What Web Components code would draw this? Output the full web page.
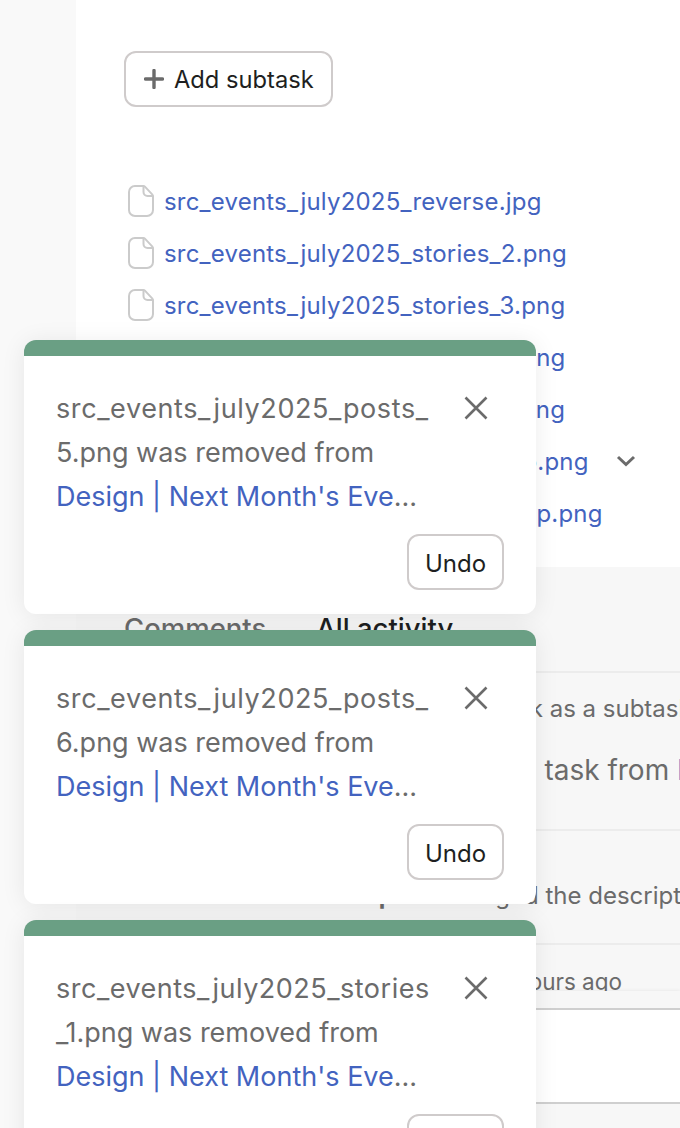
<!DOCTYPE html>
<html lang="en">
<head>
<meta charset="utf-8">
<title>Task</title>
<style>
  html, body { margin: 0; height: 100%; overflow: hidden; }
  body { font-family: Inter, "Liberation Sans", sans-serif; background: #f9f9f9; }
</style>
</head>
<body>

<task-page>
  <task-add-subtask slot="main"></task-add-subtask>
  <file-row slot="main" name="src_events_july2025_reverse.jpg"></file-row>
  <file-row slot="main" name="src_events_july2025_stories_2.png"></file-row>
  <file-row slot="main" name="src_events_july2025_stories_3.png"></file-row>
  <file-row slot="main" name="src_events_july2025_stories_4.png"></file-row>
  <file-row slot="main" name="src_events_july2025_stories_5.png"></file-row>
  <file-row slot="main" name="src_events_july2025_stories_mo.png" menu></file-row>
  <file-row slot="main" name="src_events_july2025_stories_map.png"></file-row>

  <activity-row slot="activity" style="--h:158px">
    <div style="font-size:24px;padding-top:21px;padding-left:291px">Added this task as a subtask</div>
    <div style="font-size:28px;padding-top:30px;padding-left:282px">Removed this task from <span style="color:#4363bf">Design</span></div>
  </activity-row>
  <activity-row slot="activity" style="--h:114px">
    <div style="font-size:24px;padding-top:50px;padding-left:217px"><b>Christopher</b> changed the description</div>
  </activity-row>
  <activity-row slot="activity" style="--h:70px">
    <div style="font-size:22.500px;padding-top:23px;padding-left:346px">Edited 3 hours ago</div>
  </activity-row>

  <toast-message slot="toasts" file="src_events_july2025_posts_">5.png was removed from</toast-message>
  <toast-message slot="toasts" file="src_events_july2025_posts_">6.png was removed from</toast-message>
  <toast-message slot="toasts" file="src_events_july2025_stories" style="--ls:.5px">_1.png was removed from</toast-message>
</task-page>

<script>
'use strict';

class TaskPage extends HTMLElement {
  constructor() {
    super();
    this.attachShadow({ mode: 'open' }).innerHTML = `
      <style>
        :host { display: block; position: relative; width: 680px; height: 1128px; overflow: hidden; background: #f9f9f9; }
        .panel { margin-left: 76px; height: 100%; display: flex; flex-direction: column; }
        .main { background: #fff; height: 567px; padding: 51px 0 0 48px; box-sizing: border-box; flex: none; }
        .activity { background: #f7f7f7; flex: 1; padding: 44px 0 0 48px; color: #6b6b6b; }
        .tabs { display: flex; gap: 50px; font-size: 27.500px; font-weight: 500; height: 60px; white-space: nowrap; }
        .tabs .on { color: #1e1f21; }
        .rows { margin-left: -48px; border-top: 2px solid #ececec; }
        .composer { position: absolute; left: 76px; right: 0; top: 991px; bottom: 0; background: #f7f7f7; box-shadow: 0 -1px 3px rgba(0,0,0,.05); }
        .box { box-sizing: border-box; margin-top: 17px; height: 96px; background: #fff; border-top: 2px solid #cfcfcf; border-bottom: 2px solid #cfcfcf; }
        .toasts { position: absolute; left: 24px; top: 340px; width: 512px; display: flex; flex-direction: column; gap: 16px; }
      </style>
      <div class="panel">
        <div class="main"><slot name="main"></slot></div>
        <div class="activity">
          <div class="tabs"><span>Comments</span><span class="on">All activity</span></div>
          <div class="rows"><slot name="activity"></slot></div>
        </div>
      </div>
      <div class="composer"><div class="box"></div></div>
      <div class="toasts"><slot name="toasts"></slot></div>
    `;
  }
}

class TaskAddSubtask extends HTMLElement {
  constructor() {
    super();
    this.attachShadow({ mode: 'open' }).innerHTML = `
      <style>
        :host { display: block; margin-bottom: 68px; }
        button {
          display: inline-flex; align-items: center; gap: 10px; box-sizing: border-box;
          height: 56px; width: 209px; padding: 0 0 0 18px; background: #fff; color: #1e1f21;
          border: 2px solid #cfcbcb; border-radius: 12px;
          font: 400 23.700px Inter, "Liberation Sans", sans-serif; white-space: nowrap;
        }
        svg { flex: none; }
      </style>
      <button>
        <svg width="20" height="20" viewBox="0 0 20 20"><path d="M10 1.500v17M1.500 10h17" stroke="#6b6b6b" stroke-width="3.400" stroke-linecap="round" fill="none"/></svg>
        Add subtask
      </button>
    `;
  }
}

class FileRow extends HTMLElement {
  constructor() {
    super();
    const menu = this.hasAttribute('menu')
      ? `<svg class="chev" width="20" height="12" viewBox="0 0 20 12"><path d="M2 2l8 7.500L18 2" stroke="#6b6b6b" stroke-width="3" fill="none"/></svg>`
      : '';
    this.attachShadow({ mode: 'open' }).innerHTML = `
      <style>
        :host { display: flex; align-items: center; height: 52px; white-space: nowrap; }
        .icon { flex: none; margin-left: 4px; margin-right: 10px; }
        a { color: #4363bf; font-size: 24px; letter-spacing: .2px; text-decoration: none; }
        .chev { margin-left: 27px; flex: none; }
      </style>
      <svg class="icon" width="26" height="32" viewBox="0 0 26 32" fill="none" stroke="#cbcbcb" stroke-width="2">
        <path d="M7 1h8.500a2 2 0 0 1 1.400.6l7.500 8a2 2 0 0 1 .6 1.400V25a6 6 0 0 1-6 6H7a6 6 0 0 1-6-6V7a6 6 0 0 1 6-6z"/>
        <path d="M15.500 1v6a4 4 0 0 0 4 4H25"/>
      </svg>
      <a href="#">${this.getAttribute('name')}</a>${menu}
    `;
  }
}

class ActivityRow extends HTMLElement {
  constructor() {
    super();
    this.attachShadow({ mode: 'open' }).innerHTML = `
      <style>
        :host { display: block; box-sizing: border-box; height: var(--h); border-bottom: 2px solid #ececec; white-space: nowrap; overflow: hidden; color: #6b6b6b; }
      </style>
      <slot></slot>
    `;
  }
}

class ToastMessage extends HTMLElement {
  constructor() {
    super();
    this.attachShadow({ mode: 'open' }).innerHTML = `
      <style>
        :host { display: block; box-sizing: border-box; height: 274px; flex: none; background: #fff; border-top: 16px solid #6a9f84; border-radius: 12px; box-shadow: 0 2px 24px rgba(0,0,0,.08); }
        .body { display: grid; grid-template-columns: 375px 1fr; column-gap: 32px; padding: 31px 32px 0 32px; }
        .text { font-size: 27px; line-height: 44px; color: #6b6b6b; white-space: nowrap; }
        .file { letter-spacing: var(--ls, .6px); }
        a { display: block; color: #4363bf; text-decoration: none; }
        a span { color: #6b6b6b; }
        .close { background: none; border: 0; padding: 0; width: 24px; height: 24px; margin: 9px 0 0 1px; }
        .foot { display: flex; justify-content: flex-end; padding: 15px 32px 0; }
        .undo { box-sizing: border-box; width: 97px; height: 56px; padding-top: 3px; background: #fff; color: #1e1f21; border: 2px solid #cfcbcb; border-radius: 12px; font: 400 24px Inter, "Liberation Sans", sans-serif; }
      </style>
      <div class="body">
        <div class="text">
          <div class="file">${this.getAttribute('file')}</div>
          <div><slot></slot></div>
          <a href="#">Design | Next Month's Eve<span>...</span></a>
        </div>
        <button class="close"><svg width="24" height="24" viewBox="0 0 24 24" style="display:block"><path d="M1.500 1.500l21 21M22.500 1.500l-21 21" stroke="#6b6b6b" stroke-width="2.600" fill="none"/></svg></button>
      </div>
      <div class="foot"><button class="undo">Undo</button></div>
    `;
  }
}

customElements.define('task-page', TaskPage);
customElements.define('task-add-subtask', TaskAddSubtask);
customElements.define('file-row', FileRow);
customElements.define('activity-row', ActivityRow);
customElements.define('toast-message', ToastMessage);
</script>
</body>
</html>
